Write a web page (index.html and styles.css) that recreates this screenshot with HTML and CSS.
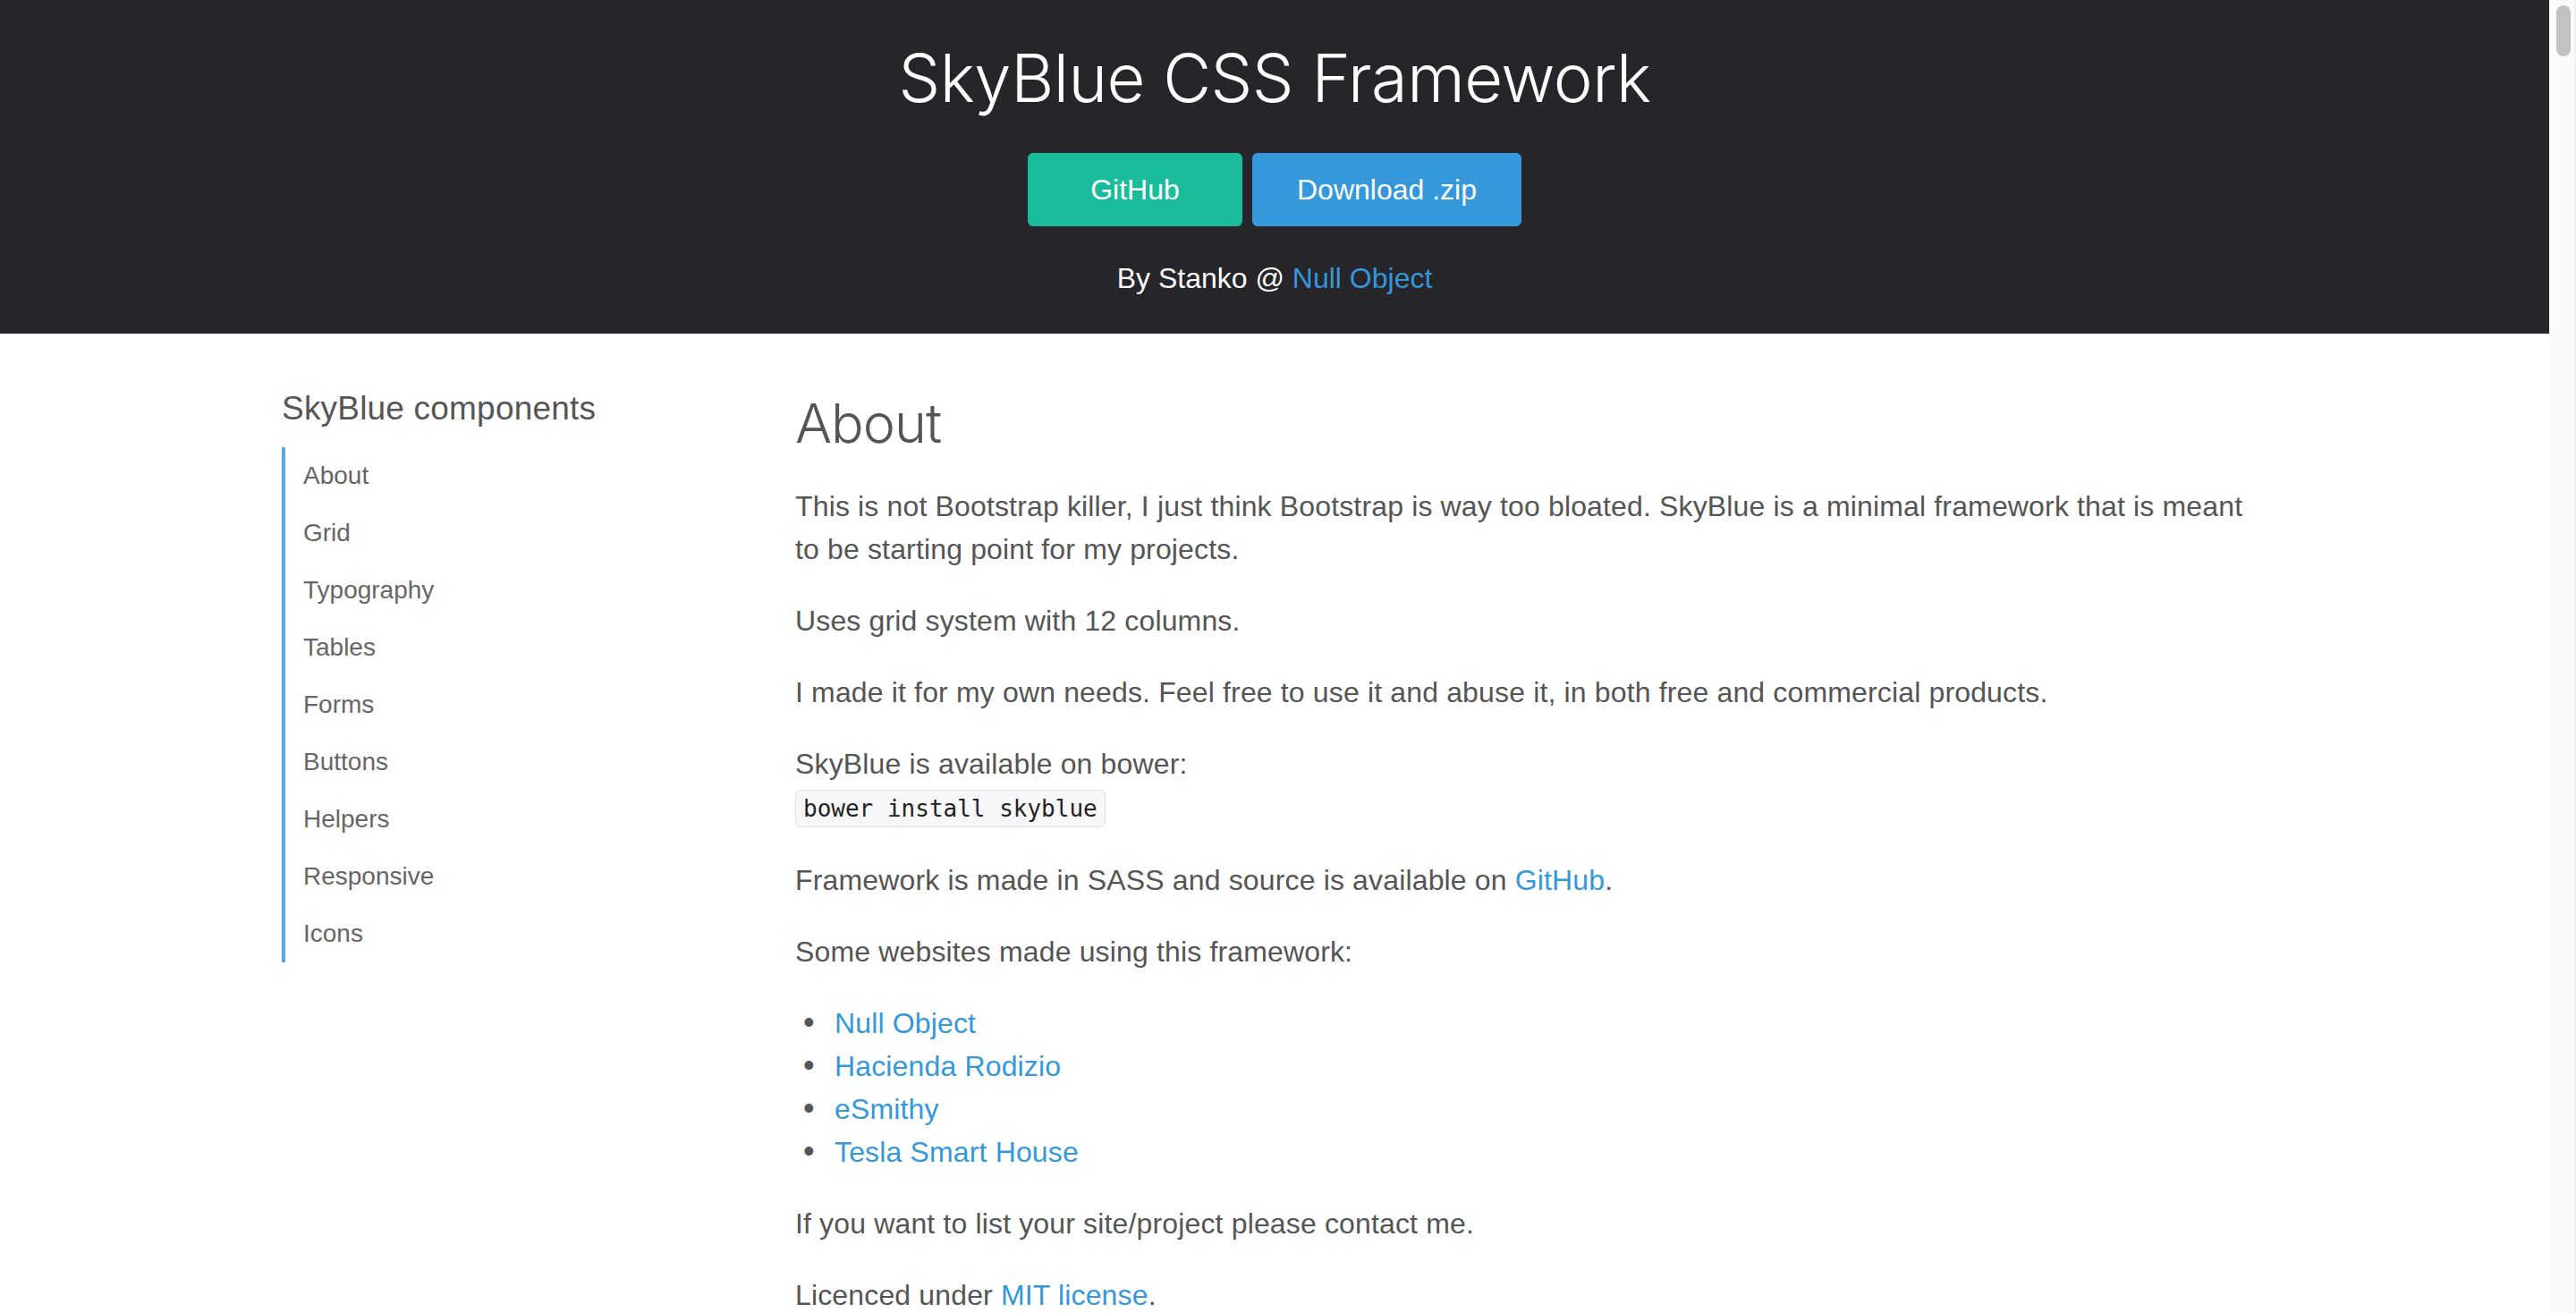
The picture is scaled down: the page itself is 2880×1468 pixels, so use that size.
FILE: index.html
```html
<!DOCTYPE html>
<html>
<head>
  <title>SkyBlue CSS Framework</title>
  <link rel="stylesheet" href="styles.css">
</head>
<body>
  <div class="page">
    <header class="hero">
      <h1 class="hero-title">SkyBlue CSS Framework</h1>
      <div class="hero-buttons">
        <a href="#" class="btn btn-github">GitHub</a>
        <a href="#" class="btn btn-download">Download .zip</a>
      </div>
      <p class="hero-byline">By Stanko @ <a href="#">Null Object</a></p>
    </header>

    <div class="container">
      <aside class="sidebar">
        <h3 class="sidebar-title">SkyBlue components</h3>
        <ul class="sidebar-nav">
          <li><a href="#about">About</a></li>
          <li><a href="#grid">Grid</a></li>
          <li><a href="#typography">Typography</a></li>
          <li><a href="#tables">Tables</a></li>
          <li><a href="#forms">Forms</a></li>
          <li><a href="#buttons">Buttons</a></li>
          <li><a href="#helpers">Helpers</a></li>
          <li><a href="#responsive">Responsive</a></li>
          <li><a href="#icons">Icons</a></li>
        </ul>
      </aside>

      <main class="content" id="about">
        <h1 class="section-title">About</h1>
        <p>This is not Bootstrap killer, I just think Bootstrap is way too bloated. SkyBlue is a minimal framework that is meant to be starting point for my projects.</p>
        <p>Uses grid system with 12 columns.</p>
        <p>I made it for my own needs. Feel free to use it and abuse it, in both free and commercial products.</p>
        <p>SkyBlue is available on bower:<br><code>bower install skyblue</code></p>
        <p>Framework is made in SASS and source is available on <a href="#">GitHub</a>.</p>
        <p>Some websites made using this framework:</p>
        <ul class="site-list">
          <li><a href="#">Null Object</a></li>
          <li><a href="#">Hacienda Rodizio</a></li>
          <li><a href="#">eSmithy</a></li>
          <li><a href="#">Tesla Smart House</a></li>
        </ul>
        <p>If you want to list your site/project please contact me.</p>
        <p>Licenced under <a href="#">MIT license</a>.</p>
      </main>
    </div>
  </div>

  <div class="scrollbar">
    <div class="scrollbar-thumb"></div>
  </div>
</body>
</html>
```

FILE: styles.css
```css
html {
  overflow: hidden;
}

body {
  margin: 0;
  padding: 0;
  font-family: "Liberation Sans", Arial, sans-serif;
  font-size: 32px;
  line-height: 48px;
  color: #555;
  background-color: #fff;
  display: grid;
  grid-template-columns: 1fr 30px;
}

a {
  color: #3498db;
  text-decoration: none;
}

.page {
  min-width: 0;
}

/* header */
.hero {
  background-color: #25252a;
  color: #fff;
  text-align: center;
  padding: 43px 0 38px;
}

.hero-title {
  margin: 0;
  font-family: Inter, "Liberation Sans", sans-serif;
  font-weight: 300;
  font-size: 74px;
  line-height: 88px;
  letter-spacing: -0.5px;
}

.hero-buttons {
  display: flex;
  justify-content: center;
  gap: 11px;
  margin-top: 40px;
}

.btn {
  display: block;
  min-width: 240px;
  box-sizing: border-box;
  padding: 24px 50px;
  line-height: 34px;
  font-size: 32px;
  color: #fff;
  border-radius: 6px;
}

.btn-github {
  background-color: #1abc9c;
}

.btn-download {
  background-color: #3498db;
}

.hero-byline {
  margin: 34px 0 0;
}

/* layout */
.container {
  max-width: 2220px;
  margin: 0 auto;
  padding-top: 62px;
  display: grid;
  grid-template-columns: 574px 1fr;
}

.sidebar-title {
  margin: 0 0 21px;
  font-size: 37px;
  line-height: 44px;
  font-weight: normal;
  letter-spacing: 0.2px;
  color: #555;
}

.sidebar-nav {
  list-style: none;
  margin: 0;
  padding: 0;
  border-left: 4px solid #55aae8;
}

.sidebar-nav li a {
  display: block;
  padding: 12px 20px;
  line-height: 40px;
  font-size: 28px;
  color: #666;
}

.section-title {
  margin: 0 0 30px;
  font-family: Inter, "Liberation Sans", sans-serif;
  font-weight: 300;
  font-size: 61px;
  line-height: 77px;
  letter-spacing: -1px;
  color: #555;
}

.content p,
.site-list {
  letter-spacing: 0.15px;
}

.content p {
  margin: 0 0 32px;
}

code {
  font-family: "DejaVu Sans Mono", "Liberation Mono", monospace;
  font-size: 26px;
  letter-spacing: 0;
  color: #222;
  background-color: #f7f7f9;
  border: 1px solid #e1e1e8;
  border-radius: 6px;
  padding: 5px 8px;
}

.site-list {
  list-style: none;
  margin: 0 0 32px;
  padding: 0;
}

.site-list li {
  height: 48px;
}

.site-list li::before {
  content: "\2022";
  display: inline-block;
  box-sizing: border-box;
  width: 44px;
  padding-left: 9px;
  font-size: 36px;
  line-height: 0;
  color: #555;
}

/* fake scrollbar */
.scrollbar {
  background-color: #fafafa;
  border-right: 2px solid #f0f0f0;
  box-sizing: border-box;
}

.scrollbar-thumb {
  margin: 6px 4px 0 8px;
  height: 57px;
  border-radius: 8px;
  background-color: #c1c1c1;
}
```
